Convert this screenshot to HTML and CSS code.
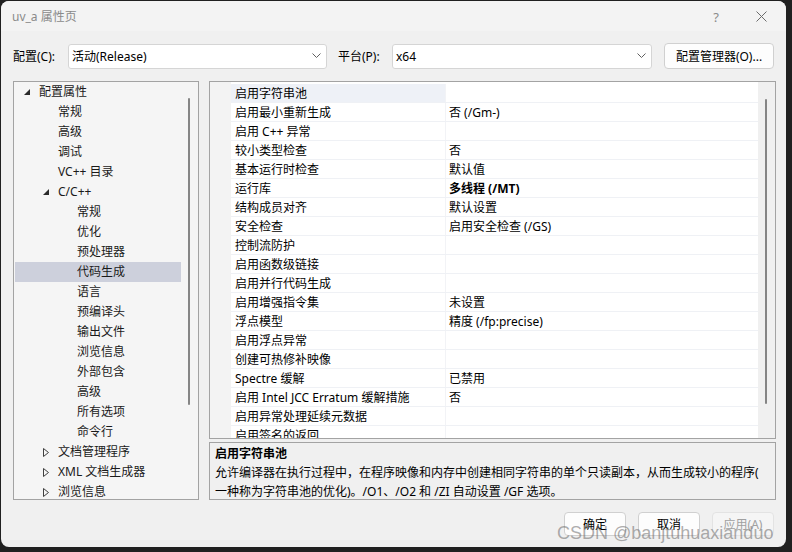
FILE: index.html
```html
<!DOCTYPE html>
<html lang="zh-CN">
<head>
<meta charset="utf-8">
<title>uv_a 属性页</title>
<link rel="stylesheet" href="styles.css">
</head>
<body>
<div class="window">
  <div class="titlebar">
    <span class="title">uv_a 属性页</span>
    <span class="help">?</span>
    <span class="close"><svg width="11" height="11" viewBox="0 0 11 11"><path d="M0.5 0.5 L10.5 10.5 M10.5 0.5 L0.5 10.5" stroke="#6b6b6b" stroke-width="1" fill="none"/></svg></span>
  </div>

  <div class="toolbar">
    <span class="lbl lbl-cfg">配置(C):</span>
    <div class="combo combo-cfg"><span>活动(Release)</span><svg class="chev" width="9" height="6" viewBox="0 0 9 6"><path d="M0.5 0.5 L4.5 4.5 L8.5 0.5" stroke="#606060" fill="none"/></svg></div>
    <span class="lbl lbl-plat">平台(P):</span>
    <div class="combo combo-plat"><span>x64</span><svg class="chev" width="9" height="6" viewBox="0 0 9 6"><path d="M0.5 0.5 L4.5 4.5 L8.5 0.5" stroke="#606060" fill="none"/></svg></div>
    <div class="btn btn-mgr">配置管理器(O)...</div>
  </div>

  <div class="main">
    <div class="tree">
      <div class="tree-list">
        <div class="node l0"><span class="exp"><svg width="6" height="6" viewBox="0 0 6 6"><polygon points="6,0 6,6 0,6" fill="#2b2b2b"/></svg></span>配置属性</div>
        <div class="node l1"><span class="exp"></span>常规</div>
        <div class="node l1"><span class="exp"></span>高级</div>
        <div class="node l1"><span class="exp"></span>调试</div>
        <div class="node l1"><span class="exp"></span>VC++ 目录</div>
        <div class="node l1"><span class="exp"><svg width="6" height="6" viewBox="0 0 6 6"><polygon points="6,0 6,6 0,6" fill="#2b2b2b"/></svg></span>C/C++</div>
        <div class="node l2"><span class="exp"></span>常规</div>
        <div class="node l2"><span class="exp"></span>优化</div>
        <div class="node l2"><span class="exp"></span>预处理器</div>
        <div class="node l2 selected"><span class="exp"></span>代码生成</div>
        <div class="node l2"><span class="exp"></span>语言</div>
        <div class="node l2"><span class="exp"></span>预编译头</div>
        <div class="node l2"><span class="exp"></span>输出文件</div>
        <div class="node l2"><span class="exp"></span>浏览信息</div>
        <div class="node l2"><span class="exp"></span>外部包含</div>
        <div class="node l2"><span class="exp"></span>高级</div>
        <div class="node l2"><span class="exp"></span>所有选项</div>
        <div class="node l2"><span class="exp"></span>命令行</div>
        <div class="node l1"><span class="exp"><svg width="6" height="9" viewBox="0 0 6 9"><polygon points="0.5,0.5 5.5,4.5 0.5,8.5" fill="none" stroke="#404040"/></svg></span>文档管理程序</div>
        <div class="node l1"><span class="exp"><svg width="6" height="9" viewBox="0 0 6 9"><polygon points="0.5,0.5 5.5,4.5 0.5,8.5" fill="none" stroke="#404040"/></svg></span>XML 文档生成器</div>
        <div class="node l1"><span class="exp"><svg width="6" height="9" viewBox="0 0 6 9"><polygon points="0.5,0.5 5.5,4.5 0.5,8.5" fill="none" stroke="#404040"/></svg></span>浏览信息</div>
      </div>
      <div class="vscroll tree-scroll"><div class="thumb"></div></div>
    </div>

    <div class="right">
      <div class="grid">
        <div class="grid-body">
          <div class="gutter"></div>
          <div class="rows">
            <div class="row first"><div class="name">启用字符串池</div><div class="val"></div></div>
            <div class="row"><div class="name">启用最小重新生成</div><div class="val">否 (/Gm-)</div></div>
            <div class="row"><div class="name">启用 C++ 异常</div><div class="val"></div></div>
            <div class="row"><div class="name">较小类型检查</div><div class="val">否</div></div>
            <div class="row"><div class="name">基本运行时检查</div><div class="val">默认值</div></div>
            <div class="row"><div class="name">运行库</div><div class="val bold">多线程 (/MT)</div></div>
            <div class="row"><div class="name">结构成员对齐</div><div class="val">默认设置</div></div>
            <div class="row"><div class="name">安全检查</div><div class="val">启用安全检查 (/GS)</div></div>
            <div class="row"><div class="name">控制流防护</div><div class="val"></div></div>
            <div class="row"><div class="name">启用函数级链接</div><div class="val"></div></div>
            <div class="row"><div class="name">启用并行代码生成</div><div class="val"></div></div>
            <div class="row"><div class="name">启用增强指令集</div><div class="val">未设置</div></div>
            <div class="row"><div class="name">浮点模型</div><div class="val">精度 (/fp:precise)</div></div>
            <div class="row"><div class="name">启用浮点异常</div><div class="val"></div></div>
            <div class="row"><div class="name">创建可热修补映像</div><div class="val"></div></div>
            <div class="row"><div class="name">Spectre 缓解</div><div class="val">已禁用</div></div>
            <div class="row"><div class="name">启用 Intel JCC Erratum 缓解措施</div><div class="val">否</div></div>
            <div class="row"><div class="name">启用异常处理延续元数据</div><div class="val"></div></div>
            <div class="row"><div class="name">启用签名的返回</div><div class="val"></div></div>
          </div>
        </div>
        <div class="vscroll grid-scroll"><div class="thumb"></div></div>
      </div>
      <div class="desc">
        <div class="desc-title">启用字符串池</div>
        <div class="desc-line">允许编译器在执行过程中，在程序映像和内存中创建相同字符串的单个只读副本，从而生成较小的程序(</div>
        <div class="desc-line">一种称为字符串池的优化)。/O1、/O2 和 /ZI 自动设置 /GF 选项。</div>
      </div>
    </div>
  </div>

  <div class="footer">
    <div class="btn btn-foot">确定</div>
    <div class="btn btn-foot">取消</div>
    <div class="btn btn-foot disabled">应用(A)</div>
  </div>
  <div class="watermark">CSDN @banjtuhuaxianduo</div>
</div>
</body>
</html>
```

FILE: styles.css
```css
* { box-sizing: border-box; }

html, body {
  margin: 0;
  padding: 0;
  width: 792px;
  height: 552px;
  background: #202020;
  overflow: hidden;
}

body {
  font-family: "Noto Sans", "Noto Sans CJK SC", sans-serif;
  font-size: 12px;
  color: #000;
}

.window {
  position: relative;
  margin: 1px 0 0 1px;
  width: 785px;
  height: 546px;
  background: #f0f0f0;
  border-radius: 8px;
  overflow: hidden;
  display: flex;
  flex-direction: column;
}

/* title bar */
.titlebar {
  height: 30px;
  background: #f3f3f3;
  display: flex;
  align-items: center;
  padding-left: 11px;
  padding-top: 2px;
  flex-shrink: 0;
}
.title {
  color: #8a8a8a;
  font-size: 12px;
  line-height: 16px;
  flex: 1;
}
.help {
  color: #8a8a8a;
  font-size: 13px;
  width: 12px;
  text-align: center;
  margin-right: 34px;
}
.close {
  display: flex;
  width: 11px;
  margin-right: 19px;
  margin-top: -1px;
}

/* toolbar */
.toolbar {
  display: flex;
  align-items: center;
  height: 26px;
  margin-top: 12px;
  padding-left: 12px;
  flex-shrink: 0;
}
.lbl {
  line-height: 16px;
  padding-top: 2px;
  white-space: nowrap;
}
.lbl-cfg { width: 55px; }
.lbl-plat { width: 54px; margin-left: 11px; }
.combo {
  height: 25px;
  background: #fff;
  border: 1px solid #d5d5d5;
  border-radius: 3px;
  display: flex;
  align-items: center;
  padding-left: 3px;
  padding-right: 5px;
}
.combo span { flex: 1; line-height: 16px; padding-top: 2px; }
.combo-cfg { width: 259px; }
.combo-plat { width: 260px; }
.chev { display: block; }

.btn {
  display: flex;
  align-items: center;
  justify-content: center;
  background: #fdfdfd;
  border: 1px solid #d0d0d0;
  border-radius: 4px;
  line-height: 16px;
  padding-top: 1px;
}
.btn-mgr {
  margin-left: 12px;
  width: 110px;
  height: 26px;
}

/* main */
.main {
  display: flex;
  margin-top: 12px;
  padding-left: 12px;
  height: 419px;
  flex-shrink: 0;
}

.tree {
  width: 186px;
  height: 419px;
  border: 1px solid #a3a3a3;
  background: #f5f5f5;
  display: flex;
  overflow: hidden;
}
.tree-list {
  width: 167px;
  padding-left: 1px;
  overflow: hidden;
}
.node {
  height: 20px;
  line-height: 20px;
  display: flex;
  align-items: center;
  white-space: nowrap;
  color: #1a1a1a;
}
.node.l0 { padding-left: 9px; }
.node.l1 { padding-left: 28px; }
.node.l2 { padding-left: 47px; }
.node.selected { background: #cdd0dc; }
.exp {
  width: 15px;
  height: 20px;
  display: flex;
  align-items: center;
  flex-shrink: 0;
}
.exp svg { display: block; }

.vscroll {
  width: 17px;
  background: #f0f0f0;
  position: relative;
  flex-shrink: 0;
}
.tree-scroll { background: #f5f5f5; }
.thumb {
  position: absolute;
  width: 2px;
  background: #858585;
  border-radius: 1px;
}
.tree-scroll .thumb { left: 7px; top: 16px; height: 307px; }
.grid-scroll .thumb { left: 7px; top: 17px; height: 305px; }

.right {
  margin-left: 10px;
  width: 567px;
  display: flex;
  flex-direction: column;
  gap: 3px;
}

.grid {
  height: 359px;
  border: 1px solid #a3a3a3;
  background: #fff;
  display: flex;
  overflow: hidden;
}
.grid-body {
  flex: 1;
  display: flex;
  overflow: hidden;
}
.gutter {
  width: 21px;
  background: #f3f3f3;
  flex-shrink: 0;
}
.rows {
  flex: 1;
  padding-top: 2px;
  overflow: hidden;
}
.row {
  height: 19px;
  display: flex;
  border-bottom: 1px solid #eff1f5;
  overflow: hidden;
}
.name {
  width: 215px;
  padding-left: 4px;
  line-height: 20px;
  white-space: nowrap;
  border-right: 1px solid #f2f3f6;
}
.row.first .name { background: #eef1f7; }
.val {
  flex: 1;
  padding-left: 3px;
  line-height: 20px;
  white-space: nowrap;
}
.val.bold { font-weight: bold; }

.desc {
  height: 58px;
  border: 1px solid #a3a3a3;
  background: #f0f0f0;
  padding: 1px 5px 0;
}
.desc-title {
  font-weight: bold;
  line-height: 19px;
}
.desc-line {
  line-height: 19px;
  white-space: nowrap;
}

/* footer */
.footer {
  display: flex;
  justify-content: flex-end;
  gap: 12px;
  margin-top: 12px;
  padding-right: 12px;
}
.btn-foot {
  width: 62px;
  height: 24px;
}
.btn-foot.disabled {
  color: #a0a0a0;
  background: #f5f5f5;
  border-color: #e3e3e3;
}

.watermark {
  position: absolute;
  left: 556px;
  top: 521px;
  font-family: "Liberation Sans", Arial, sans-serif;
  font-size: 18px;
  line-height: 22px;
  color: rgba(105, 105, 105, 0.55);
  white-space: nowrap;
}
```
